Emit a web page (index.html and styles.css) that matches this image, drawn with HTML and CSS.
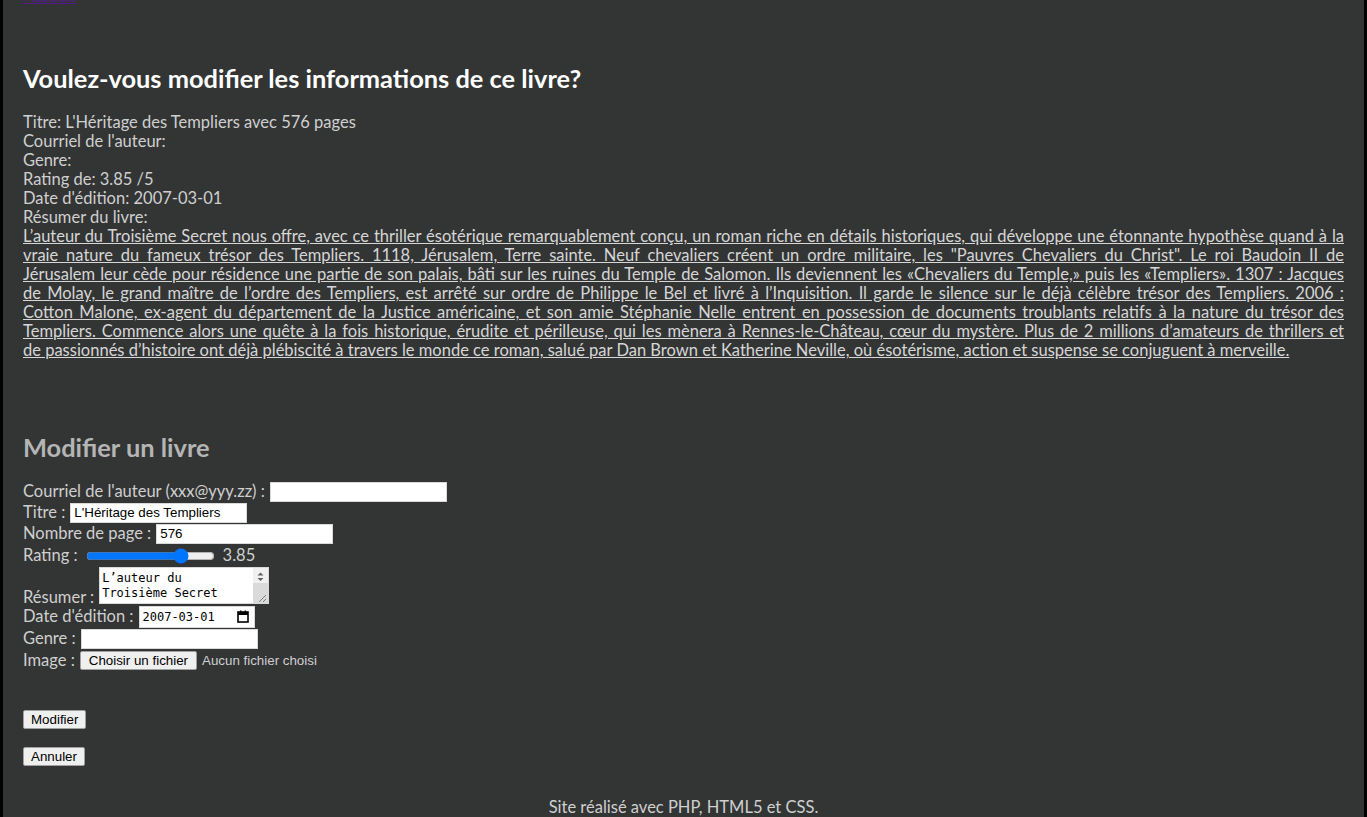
FILE: index.html
```html
<!DOCTYPE html>
<html lang="fr">
<head>
<meta charset="utf-8">
<title>Modifier un livre</title>
<link rel="stylesheet" href="styles.css">
</head>
<body>
<div class="page">
  <nav class="topnav"><a class="toplink" href="#">Accueil</a></nav>

  <h2 class="title">Voulez-vous modifier les informations de ce livre?</h2>

  <div class="info">
    <div class="info-line">Titre: L'Héritage des Templiers avec 576 pages</div>
    <div class="info-line">Courriel de l'auteur:</div>
    <div class="info-line">Genre:</div>
    <div class="info-line">Rating de: 3.85 /5</div>
    <div class="info-line">Date d'édition: 2007-03-01</div>
    <div class="info-line">Résumer du livre:</div>
    <a class="summary" href="#"><span class="ln">L’auteur du Troisième Secret nous offre, avec ce thriller ésotérique remarquablement conçu, un roman riche en détails historiques, qui développe une étonnante hypothèse quand à la</span><span class="ln">vraie nature du fameux trésor des Templiers. 1118, Jérusalem, Terre sainte. Neuf chevaliers créent un ordre militaire, les "Pauvres Chevaliers du Christ". Le roi Baudoin II de</span><span class="ln">Jérusalem leur cède pour résidence une partie de son palais, bâti sur les ruines du Temple de Salomon. Ils deviennent les «Chevaliers du Temple,» puis les «Templiers». 1307 : Jacques</span><span class="ln">de Molay, le grand maître de l’ordre des Templiers, est arrêté sur ordre de Philippe le Bel et livré à l’Inquisition. Il garde le silence sur le déjà célèbre trésor des Templiers. 2006 :</span><span class="ln">Cotton Malone, ex-agent du département de la Justice américaine, et son amie Stéphanie Nelle entrent en possession de documents troublants relatifs à la nature du trésor des</span><span class="ln">Templiers. Commence alors une quête à la fois historique, érudite et périlleuse, qui les mènera à Rennes-le-Château, cœur du mystère. Plus de 2 millions d’amateurs de thrillers et</span><span class="ln last">de passionnés d’histoire ont déjà plébiscité à travers le monde ce roman, salué par Dan Brown et Katherine Neville, où ésotérisme, action et suspense se conjuguent à merveille.</span></a>
  </div>

  <h2 class="form-title">Modifier un livre</h2>

  <form class="book-form" action="#">
    <div class="row row-std">
      <label class="lbl" for="email">Courriel de l'auteur (xxx@yyy.zz) :</label>
      <input class="field" id="email" type="text" value="">
    </div>
    <div class="row row-std">
      <label class="lbl" for="titre">Titre :</label>
      <input class="field" id="titre" type="text" value="L'Héritage des Templiers">
    </div>
    <div class="row row-std">
      <label class="lbl" for="pages">Nombre de page :</label>
      <input class="field" id="pages" type="text" value="576">
    </div>
    <div class="row row-rating">
      <label class="lbl" for="rating">Rating :</label>
      <input class="range" id="rating" type="range" min="0" max="5" step="0.01" value="3.85">
      <span class="range-val">3.85</span>
    </div>
    <div class="row row-area">
      <label class="lbl" for="resume">Résumer :</label>
      <span class="area-wrap">
        <textarea class="area" id="resume">L’auteur du Troisième Secret nous offre, avec ce thriller ésotérique remarquablement conçu, un roman riche en détails historiques, qui développe une étonnante hypothèse quand à la vraie nature du fameux trésor des Templiers. 1118, Jérusalem, Terre sainte. Neuf chevaliers créent un ordre militaire, les "Pauvres Chevaliers du Christ".</textarea>
        <svg class="area-bar" width="15" height="35" viewBox="0 0 15 35"><rect x="0" y="0" width="15" height="35" fill="#f0f0f0"/><rect x="0" y="15" width="15" height="20" fill="#dadada"/><path d="M4.5 7.5 L7.5 4.5 L10.5 7.5 Z" fill="#606060"/><path d="M4.5 10 L7.5 13 L10.5 10 Z" fill="#606060"/><path d="M13 27 L6 34 M13 31 L10 34" stroke="#808080" stroke-width="1" fill="none"/></svg>
      </span>
    </div>
    <div class="row row-date">
      <label class="lbl" for="date">Date d'édition :</label>
      <span class="datebox"><input class="date-text" id="date" type="text" value="2007-03-01"><svg class="cal" width="12" height="13" viewBox="0 0 12 13"><rect x="1" y="2" width="10" height="10" fill="none" stroke="#000" stroke-width="1.6"/><rect x="1" y="2" width="10" height="3" fill="#000"/><rect x="3" y="0.5" width="1.5" height="2.5" fill="#000"/><rect x="7.5" y="0.5" width="1.5" height="2.5" fill="#000"/></svg></span>
    </div>
    <div class="row row-std">
      <label class="lbl" for="genre">Genre :</label>
      <input class="field" id="genre" type="text" value="">
    </div>
    <div class="row row-file">
      <span class="lbl">Image :</span>
      <label class="file-btn" for="image">Choisir un fichier</label>
      <input class="file-hidden" id="image" type="file">
      <span class="file-name">Aucun fichier choisi</span>
    </div>

    <div class="actions">
      <button class="btn" type="submit">Modifier</button>
      <button class="btn" type="button">Annuler</button>
    </div>
  </form>

  <footer class="footer">Site réalisé avec PHP, HTML5 et CSS.</footer>
</div>
</body>
</html>
```

FILE: styles.css
```css
html {
  background: #000;
}

body {
  margin: 0;
}

.page {
  margin: 0 3px;
  padding: 0 20px 20px;
  min-height: 100vh;
  box-sizing: border-box;
  background: #333535;
  color: #cfcfcf;
  font-family: Lato, "Open Sans", sans-serif;
  font-size: 16.5px;
  line-height: 19px;
}

.topnav {
  margin-top: -13px;
  height: 19px;
}

.toplink {
  color: #551a8b;
}

.title {
  margin: 58px 0 21px;
  font-size: 25.4px;
  line-height: 28px;
  font-weight: 700;
  color: #ffffff;
}

.info-line {
  height: 19px;
}

.summary {
  display: block;
  color: #d6d6d6;
  text-decoration: underline;
}

.summary .ln {
  display: block;
  text-align: justify;
  text-align-last: justify;
  white-space: nowrap;
}

.summary .ln.last {
  text-align-last: left;
}

.form-title {
  margin: 73px 0 20px;
  font-size: 25.4px;
  line-height: 28px;
  font-weight: 700;
  color: #b5b5b5;
}

.book-form {
  display: flex;
  flex-direction: column;
}

.row {
  display: flex;
  align-items: center;
  gap: 5px;
}

.row-std {
  height: 21px;
}

.row-rating {
  height: 23px;
}

.row-area {
  height: 38px;
  align-items: flex-end;
}

.row-area .lbl {
  margin-bottom: -2px;
}

.row-date {
  height: 23px;
}

.row-file {
  height: 22px;
}

.field {
  box-sizing: border-box;
  width: 177px;
  height: 20px;
  margin: 0;
  padding: 1px 3px;
  border: 1px solid #d9d9d9;
  background: #fff;
  color: #000;
  font-family: "Liberation Sans", Arial, sans-serif;
  font-size: 13.33px;
}

.range {
  width: 129px;
  margin: 0 2px 0 3px;
}

.range-val {
  margin-left: 1px;
}

.area-wrap {
  position: relative;
  display: block;
  width: 170px;
  height: 37px;
  margin-bottom: 1px;
}

.area-wrap::after {
  content: "";
  position: absolute;
  left: 1px;
  right: 16px;
  bottom: 1px;
  height: 3px;
  background: #fff;
}

.area {
  display: block;
  box-sizing: border-box;
  width: 170px;
  height: 37px;
  margin: 0;
  padding: 3px 17px 0 2px;
  border: 1px solid #d9d9d9;
  background: #fff;
  color: #000;
  font-family: "DejaVu Sans Mono", monospace;
  font-size: 12px;
  line-height: 15px;
  overflow: hidden;
  resize: none;
}

.area-bar {
  position: absolute;
  top: 1px;
  right: 1px;
}

.datebox {
  box-sizing: border-box;
  display: inline-flex;
  align-items: center;
  width: 116px;
  height: 22px;
  padding: 0 5px 0 3px;
  border: 1px solid #d9d9d9;
  background: #fff;
}

.date-text {
  flex: 1;
  min-width: 0;
  width: 90px;
  padding: 0;
  margin: 0;
  border: 0;
  outline: none;
  background: transparent;
  color: #000;
  font-family: "DejaVu Sans Mono", monospace;
  font-size: 12px;
}

.cal {
  flex: none;
}

.file-btn {
  box-sizing: border-box;
  display: inline-block;
  height: 19px;
  padding: 0 8px;
  border: 1px solid #a0a0a0;
  border-radius: 2px;
  background: #efefef;
  color: #000;
  font-family: "Liberation Sans", Arial, sans-serif;
  font-size: 13.33px;
  line-height: 17px;
}

.file-hidden {
  display: none;
}

.file-name {
  color: #cfcfcf;
  font-family: "Liberation Sans", Arial, sans-serif;
  font-size: 13.33px;
}

.actions {
  display: flex;
  flex-direction: column;
  align-items: flex-start;
  gap: 18px;
  margin-top: 39px;
}

.btn {
  box-sizing: border-box;
  height: 19px;
  margin: 0;
  padding: 0 7px;
  border: 1px solid #a0a0a0;
  border-radius: 2px;
  background: #efefef;
  color: #000;
  font-family: "Liberation Sans", Arial, sans-serif;
  font-size: 13.33px;
  line-height: 17px;
}

.footer {
  margin-top: 32px;
  text-align: center;
  color: #cfcfcf;
}
```
